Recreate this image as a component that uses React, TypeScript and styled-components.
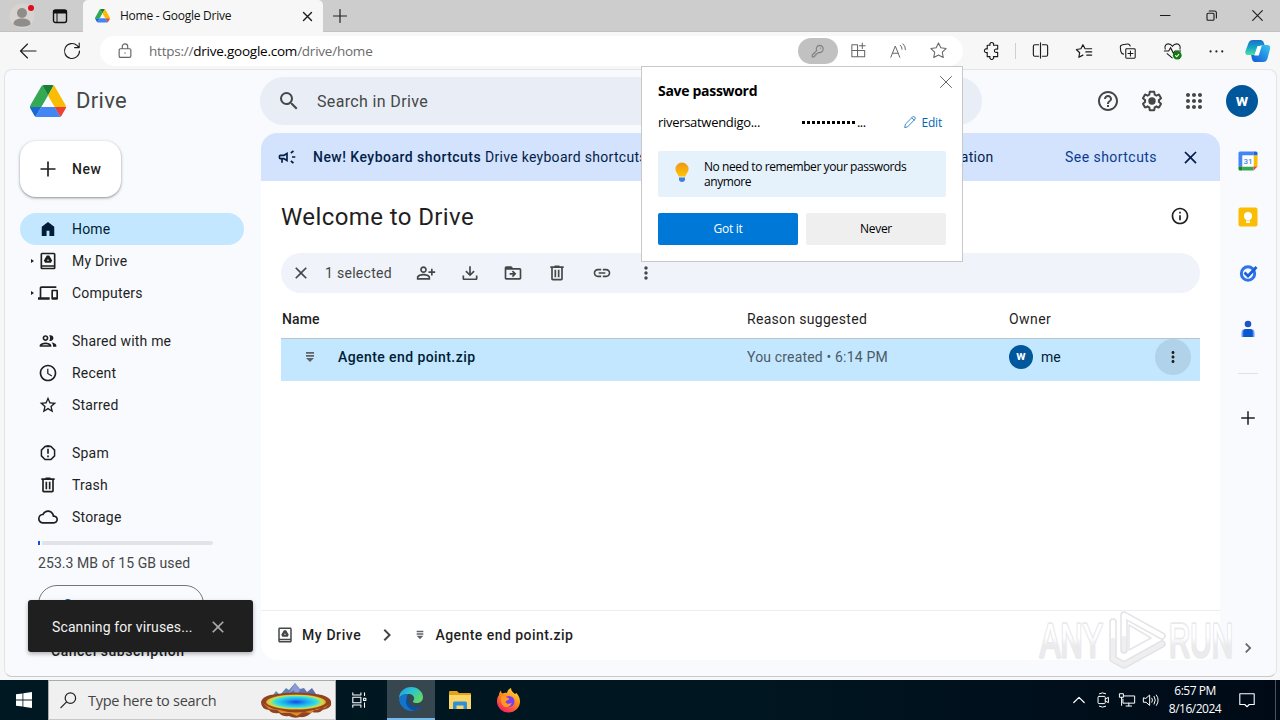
import React from 'react';
import styled, { createGlobalStyle } from 'styled-components';

const GlobalStyle = createGlobalStyle`
  * {
    box-sizing: border-box;
  }
  body {
    margin: 0;
    background: #f7f7f7;
    overflow: hidden;
  }
  svg {
    display: block;
    flex: none;
  }
`;

const UI_FONT = '"Open Sans", "Noto Sans", sans-serif';
const DRIVE_FONT = 'Roboto, "Liberation Sans", sans-serif';

/* ---------- shared ---------- */

interface IconProps {
  d: string;
  size?: number;
  box?: string;
  color?: string;
}

// filled glyph
const Icon: React.FC<IconProps> = ({ d, size = 20, box = '0 0 24 24', color = 'currentColor' }) => (
  <svg width={size} height={size} viewBox={box} fill={color}>
    <path d={d} fillRule="evenodd" />
  </svg>
);

interface LineIconProps extends IconProps {
  weight?: number;
}

// thin outline glyph, used by the browser chrome
const LineIcon: React.FC<LineIconProps> = ({ d, size = 20, box = '0 0 20 20', color = '#1b1b1b', weight = 1.1 }) => (
  <svg
    width={size}
    height={size}
    viewBox={box}
    fill="none"
    stroke={color}
    strokeWidth={weight}
    strokeLinecap="round"
    strokeLinejoin="round"
  >
    <path d={d} />
  </svg>
);

const Text = styled.span<{ $size?: number; $weight?: number; $color?: string; $track?: number }>`
  font-size: ${(p) => p.$size ?? 14}px;
  font-weight: ${(p) => p.$weight ?? 400};
  color: ${(p) => p.$color ?? 'inherit'};
  letter-spacing: ${(p) => p.$track ?? 0}px;
  white-space: pre;
`;

const Cell = styled.div<{ $w: number }>`
  width: ${(p) => p.$w}px;
  flex: none;
  display: flex;
  align-items: center;
  justify-content: center;
`;

const Spacer = styled.div`
  flex: 1;
`;

const icons = {
  close: 'M19 6.41 17.59 5 12 10.59 6.41 5 5 6.41 10.59 12 5 17.59 6.41 19 12 13.41 17.59 19 19 17.59 13.41 12z',
  search:
    'M15.5 14h-.79l-.28-.27A6.47 6.47 0 0 0 16 9.5 6.5 6.5 0 1 0 9.5 16c1.61 0 3.09-.59 4.23-1.57l.27.28v.79l5 4.99L20.49 19l-4.99-5zm-6 0C7.01 14 5 11.99 5 9.5S7.01 5 9.5 5 14 7.01 14 9.5 11.99 14 9.5 14z',
  home: 'M4.5 20.5V9.2L12 3.5l7.5 5.7v11.3h-5.8v-6.4h-3.4v6.4z',
  myDrive:
    'M19 2H5c-1.1 0-2 .9-2 2v16c0 1.1.9 2 2 2h14c1.1 0 2-.9 2-2V4c0-1.100-.9-2-2-2zm0 18H5v-1h14v1zm0-3H5V4h14v13zM13.5 5.500h-3L7 11.500 8.500 14.200h7L17 11.500zm-2.700 6.200L12 9.600l1.200 2.100z',
  computers:
    'M4 6h18V4H4c-1.1 0-2 .9-2 2v11H0v3h14v-3H4V6zm19 2h-6c-.55 0-1 .45-1 1v10c0 .55.45 1 1 1h6c.55 0 1-.45 1-1V9c0-.55-.45-1-1-1zm-1 9h-4v-7h4v7z',
  shared:
    'M9 13.750c-2.340 0-7 1.170-7 3.500V19h14v-1.750c0-2.330-4.660-3.500-7-3.500zM4.340 17c.84-.58 2.870-1.250 4.660-1.250s3.820.67 4.660 1.250H4.340zM9 12c1.930 0 3.500-1.570 3.500-3.500S10.930 5 9 5 5.500 6.570 5.500 8.500 7.070 12 9 12zm0-5c.83 0 1.500.67 1.500 1.500S9.830 10 9 10s-1.500-.67-1.500-1.500S8.170 7 9 7zm7.040 6.810c1.160.84 1.960 1.960 1.960 3.440V19h4v-1.750c0-2.020-3.500-3.170-5.960-3.440zM15 12c1.930 0 3.500-1.570 3.500-3.500S16.930 5 15 5c-.54 0-1.040.13-1.500.35.63.89 1 1.980 1 3.150s-.37 2.260-1 3.150c.46.22.96.35 1.500.35z',
  recent:
    'M11.990 2C6.470 2 2 6.480 2 12s4.470 10 9.990 10C17.520 22 22 17.520 22 12S17.520 2 11.990 2zM12 20c-4.420 0-8-3.580-8-8s3.580-8 8-8 8 3.580 8 8-3.580 8-8 8zm.5-13H11v6l5.250 3.150.75-1.230-4.500-2.670z',
  star: 'M22 9.240l-7.190-.62L12 2 9.190 8.630 2 9.240l5.460 4.730L5.820 21 12 17.270 18.180 21l-1.630-7.030L22 9.240zM12 15.400l-3.760 2.270 1-4.280-3.320-2.880 4.380-.38L12 6.100l1.710 4.040 4.380.38-3.320 2.880 1 4.280L12 15.400z',
  spam: 'M12 2.500 8 3.200 3.200 8v8L8 20.800h8l4.800-4.800V8L16 3.200zM8.800 5.100h6.400l3.800 3.800v6.200l-3.800 3.800H8.800L5 15.100V8.900zM11 7h2v6h-2zM11 15h2v2h-2z',
  trash:
    'M15 4V3H9v1H4v2h1v13c0 1.100.9 2 2 2h10c1.100 0 2-.9 2-2V6h1V4h-5zm2 15H7V6h10v13zM9 8h2v9H9zm4 0h2v9h-2z',
  cloud:
    'M19.350 10.040C18.670 6.590 15.640 4 12 4 9.110 4 6.600 5.640 5.350 8.040 2.340 8.360 0 10.910 0 14c0 3.310 2.690 6 6 6h13c2.760 0 5-2.240 5-5 0-2.640-2.050-4.780-4.650-4.960zM19 18H6c-2.210 0-4-1.790-4-4 0-2.050 1.530-3.760 3.560-3.970l1.070-.11.5-.95C8.080 7.140 9.940 6 12 6c2.620 0 4.880 1.860 5.390 4.430l.3 1.500 1.530.11c1.560.1 2.780 1.410 2.780 2.960 0 1.650-1.350 3-3 3z',
  help: 'M11 18h2v-2h-2v2zm1-16C6.480 2 2 6.480 2 12s4.480 10 10 10 10-4.480 10-10S17.520 2 12 2zm0 18c-4.410 0-8-3.590-8-8s3.590-8 8-8 8 3.590 8 8-3.590 8-8 8zm0-14c-2.210 0-4 1.790-4 4h2c0-1.100.9-2 2-2s2 .9 2 2c0 2-3 1.750-3 5h2c0-2.250 3-2.500 3-5 0-2.210-1.790-4-4-4z',
  settings:
    'M13.850 22.250h-3.700c-.74 0-1.360-.54-1.450-1.270l-.27-1.890c-.27-.14-.53-.29-.79-.46l-1.800.72c-.7.26-1.470-.03-1.810-.65L2.200 15.530c-.35-.66-.2-1.440.36-1.880l1.530-1.190c-.01-.15-.02-.3-.02-.46 0-.15.01-.31.02-.46l-1.520-1.190c-.59-.45-.74-1.260-.37-1.880l1.850-3.190c.34-.62 1.110-.9 1.790-.63l1.810.73c.26-.17.52-.32.78-.46l.27-1.910c.09-.7.71-1.250 1.440-1.250h3.700c.74 0 1.360.54 1.450 1.270l.27 1.890c.27.14.53.29.79.46l1.800-.72c.71-.26 1.480.03 1.820.65l1.840 3.180c.36.66.2 1.440-.36 1.880l-1.520 1.190c.01.15.02.3.02.46s-.01.31-.02.46l1.520 1.190c.56.45.72 1.230.37 1.860l-1.860 3.220c-.34.62-1.110.9-1.800.63l-1.800-.72c-.26.17-.52.32-.78.46l-.27 1.910c-.1.680-.720 1.220-1.460 1.220zm-3.230-2h2.760l.37-2.550.53-.22c.44-.18.88-.44 1.340-.78l.45-.34 2.380.96 1.380-2.400-2.030-1.580.07-.56c.03-.26.06-.51.06-.78s-.03-.53-.06-.78l-.07-.56 2.030-1.580-1.390-2.400-2.390.96-.45-.35c-.42-.32-.87-.58-1.330-.77l-.52-.22-.37-2.550h-2.760l-.37 2.550-.53.21c-.44.19-.88.44-1.340.79l-.45.33-2.380-.95-1.390 2.390 2.030 1.580-.07.56a7 7 0 0 0-.06.79c0 .26.02.53.06.78l.07.56-2.030 1.580 1.380 2.400 2.390-.96.45.35c.43.33.86.58 1.330.77l.53.22.38 2.550zM12 8.300a3.700 3.700 0 1 0 0 7.400 3.700 3.700 0 0 0 0-7.400z',
  apps: 'M6 8c1.100 0 2-.9 2-2s-.9-2-2-2-2 .9-2 2 .9 2 2 2zm6 12c1.100 0 2-.9 2-2s-.9-2-2-2-2 .9-2 2 .9 2 2 2zm-6 0c1.100 0 2-.9 2-2s-.9-2-2-2-2 .9-2 2 .9 2 2 2zm0-6c1.100 0 2-.9 2-2s-.9-2-2-2-2 .9-2 2 .9 2 2 2zm6 0c1.100 0 2-.9 2-2s-.9-2-2-2-2 .9-2 2 .9 2 2 2zm4-8c0 1.100.9 2 2 2s2-.9 2-2-.9-2-2-2-2 .9-2 2zm-4 2c1.100 0 2-.9 2-2s-.9-2-2-2-2 .9-2 2 .9 2 2 2zm6 6c1.100 0 2-.9 2-2s-.9-2-2-2-2 .9-2 2 .9 2 2 2zm0 6c1.100 0 2-.9 2-2s-.9-2-2-2-2 .9-2 2 .9 2 2 2z',
  campaign:
    'M18 11v2h4v-2h-4zM16 17.610c.96.71 2.210 1.650 3.200 2.390.4-.53.8-1.070 1.200-1.600-.99-.74-2.240-1.680-3.200-2.400-.4.540-.8 1.080-1.200 1.610zM20.400 5.600c-.4-.53-.8-1.070-1.200-1.600-.99.740-2.240 1.680-3.200 2.400.4.530.8 1.070 1.200 1.600.96-.720 2.210-1.650 3.200-2.400zM4 9c-1.100 0-2 .9-2 2v2c0 1.100.9 2 2 2h1v4h2v-4h1l5 3V6L8 9H4zm5.030 1.710L11 9.530v4.940l-1.970-1.180-.48-.29H4v-2h4.550l.48-.29z',
  info: 'M11 7h2v2h-2zm0 4h2v6h-2zm1-9C6.480 2 2 6.480 2 12s4.480 10 10 10 10-4.480 10-10S17.520 2 12 2zm0 18c-4.410 0-8-3.590-8-8s3.590-8 8-8 8 3.590 8 8-3.590 8-8 8z',
  personAdd:
    'M9 12c2.210 0 4-1.790 4-4s-1.790-4-4-4-4 1.790-4 4 1.790 4 4 4zm0-6c1.100 0 2 .9 2 2s-.9 2-2 2-2-.9-2-2 .9-2 2-2zm0 7c-2.670 0-8 1.340-8 4v3h16v-3c0-2.660-5.330-4-8-4zm6 5H3v-.99C3.200 16.290 6.300 15 9 15s5.800 1.290 6 2v1zm5-8V7h-2v3h-3v2h3v3h2v-3h3v-2z',
  download: 'M11 4h2v8.200l3.200-3.200 1.400 1.400L12 16l-5.600-5.600L7.800 9l3.200 3.200zM3 15h2v3.500h14V15h2v3.500c0 1.100-.9 2-2 2H5c-1.100 0-2-.9-2-2z',
  move: 'M20 6h-8l-2-2H4c-1.100 0-2 .9-2 2v12c0 1.100.9 2 2 2h16c1.100 0 2-.9 2-2V8c0-1.100-.9-2-2-2zm0 12H4V8h16v10zM12 9l-1.400 1.400 1.600 1.600H8v2h4.200l-1.600 1.600L12 17l4-4z',
  link: 'M3.900 12c0-1.710 1.390-3.100 3.100-3.100h4V7H7c-2.760 0-5 2.240-5 5s2.240 5 5 5h4v-1.900H7c-1.710 0-3.100-1.390-3.100-3.100zM8 13h8v-2H8v2zm9-6h-4v1.900h4c1.710 0 3.100 1.390 3.100 3.100s-1.390 3.100-3.100 3.100h-4V17h4c2.760 0 5-2.240 5-5s-2.240-5-5-5z',
  more: 'M12 8c1.100 0 2-.9 2-2s-.9-2-2-2-2 .9-2 2 .9 2 2 2zm0 2c-1.100 0-2 .9-2 2s.9 2 2 2 2-.9 2-2-.9-2-2-2zm0 6c-1.100 0-2 .9-2 2s.9 2 2 2 2-.9 2-2-.9-2-2-2z',
  chevron: 'M8.590 16.590 13.170 12 8.590 7.410 10 6l6 6-6 6z',
  plus: 'M11 3h2v8h8v2h-8v8h-2v-8H3v-2h8z',
  zip: 'M4 2h16v3.500H4zM4 8h16v3.500H4zM4 14h16L12 22z',
};

const DriveLogo: React.FC<{ size: number }> = ({ size }) => (
  <svg width={size} height={size * 0.9} viewBox="0 0 87.3 78">
    <path d="m6.600 66.850 3.850 6.650c.8 1.400 1.950 2.500 3.300 3.300l13.750-23.800h-27.500c0 1.550.4 3.100 1.200 4.500z" fill="#1967d2" />
    <path d="m43.650 25-13.750-23.800c-1.350.8-2.500 1.900-3.300 3.300l-25.400 44a9.060 9.060 0 0 0-1.200 4.500h27.500z" fill="#34a853" />
    <path d="m73.550 76.800c1.350-.8 2.500-1.900 3.300-3.300l1.600-2.750 7.650-13.250c.8-1.400 1.200-2.950 1.200-4.500h-27.500l5.850 11.500z" fill="#ea4335" />
    <path d="m43.650 25 13.750-23.800c-1.350-.8-2.900-1.200-4.500-1.200h-18.500c-1.600 0-3.150.45-4.500 1.200z" fill="#188038" />
    <path d="m59.800 53h-32.300l-13.750 23.800c1.350.8 2.900 1.200 4.500 1.200h50.800c1.600 0 3.150-.45 4.500-1.200z" fill="#4285f4" />
    <path d="m73.400 26.500-12.700-22c-.8-1.400-1.950-2.500-3.300-3.300l-13.750 23.800 16.150 28h27.450c0-1.550-.4-3.100-1.200-4.500z" fill="#fbbc04" />
  </svg>
);

/* ---------- browser chrome ---------- */

const Screen = styled.div`
  position: relative;
  width: 1280px;
  height: 720px;
  display: flex;
  flex-direction: column;
  overflow: hidden;
  background: #f7f7f7;
  font-family: ${UI_FONT};
`;

const TitleBar = styled.div`
  height: 32px;
  flex: none;
  display: flex;
  background: #cdcdcd;
  border-bottom: 1px solid #c2c2c2;
`;

const Tab = styled.div`
  width: 240px;
  height: 32px;
  margin-left: 2px;
  padding: 0 10px 0 12px;
  display: flex;
  align-items: center;
  background: #f7f7f7;
  border-radius: 5px 5px 0 0;
`;

const TabTitle = styled.div`
  flex: 1;
  padding-left: 10px;
  font-size: 12px;
  line-height: 16px;
  letter-spacing: -0.25px;
  white-space: nowrap;
  color: #111;
`;

const ToolBar = styled.div`
  height: 37px;
  flex: none;
  display: flex;
  align-items: center;
  padding-left: 6px;
`;

const AddressBar = styled.div`
  width: 863px;
  height: 30px;
  margin: 0 6px 0 6px;
  display: flex;
  align-items: center;
  background: #fff;
  border-radius: 15px;
`;

const Url = styled.div`
  flex: 1;
  font-size: 13.5px;
  letter-spacing: -0.23px;
  color: #6b6b6b;
  white-space: nowrap;

  b {
    font-weight: 400;
    color: #000;
  }
`;

const KeyPill = styled.div`
  width: 40px;
  height: 26px;
  display: flex;
  align-items: center;
  justify-content: center;
  background: #c1c1c1;
  border-radius: 13px;
`;

const Separator = styled.div`
  width: 1px;
  height: 16px;
  margin: 0 2px;
  background: #cfcfcf;
`;

const Chrome = () => (
  <>
    <TitleBar>
      <Cell $w={44}>
        <svg width="26" height="26" viewBox="0 0 26 26">
          <circle cx="13" cy="13" r="12.500" fill="#d6d3d1" />
          <circle cx="13" cy="10" r="5" fill="#8f8c8a" />
          <path d="M4.500 21c0-4 4-5.500 8.500-5.500s8.500 1.500 8.500 5.500c-2 3.500-15 3.500-17 0z" fill="#8f8c8a" />
          <circle cx="22" cy="5" r="3" fill="#e00b1c" />
        </svg>
      </Cell>
      <Cell $w={32}>
        <svg width="16" height="16" viewBox="0 0 16 16">
          <rect x="1.500" y="2" width="13" height="12.500" rx="2" fill="none" stroke="#111" strokeWidth="1.400" />
          <path d="M1.500 2h13v3.500h-13z" fill="#111" />
          <path d="M5 4v10" stroke="#111" />
        </svg>
      </Cell>
      <Cell $w={5} />
      <Tab>
        <DriveLogo size={15} />
        <TabTitle>Home - Google Drive</TabTitle>
        <LineIcon d="M1.500 1.500l8 8m0-8l-8 8" size={11} box="0 0 11 11" weight={1.400} />
      </Tab>
      <Cell $w={34}>
        <LineIcon d="M7 .5v13M.5 7h13" size={14} box="0 0 14 14" color="#222" weight={1.200} />
      </Cell>
      <Spacer />
      <Cell $w={46}>
        <LineIcon d="M0 5.500h10" size={11} box="0 0 11 11" />
      </Cell>
      <Cell $w={46}>
        <LineIcon d="M1 4.200q0-1 1-1h5q1 0 1 1v5q0 1-1 1h-5q-1 0-1-1zM3.200 1h5.200q2 0 2 2v5" size={11} box="0 0 11 11" />
      </Cell>
      <Cell $w={46}>
        <LineIcon d="M.7.7l9.600 9.600m0-9.600L.7 10.300" size={11} box="0 0 11 11" />
      </Cell>
    </TitleBar>
    <ToolBar>
      <Cell $w={44}>
        <LineIcon d="M18 10H2.500M9.500 3 2.500 10l7 7" />
      </Cell>
      <Cell $w={44}>
        <LineIcon d="M17.500 10a7.500 7.500 0 1 1-2.300-5.400L17 6.500M17.200 2v4.600h-4.600" />
      </Cell>
      <AddressBar>
        <Cell $w={49}>
          <LineIcon d="M5 7.500h10q1.500 0 1.500 1.500v6.500q0 1.500-1.500 1.500h-10q-1.500 0-1.500-1.500V9q0-1.500 1.500-1.500zM7 7.500V5a3 3 0 0 1 6 0v2.500M10 12v.4" size={18} color="#666" weight={1.300} />
        </Cell>
        <Url>
          https://<b>drive.google.com</b>/drive/home
        </Url>
        <KeyPill>
          <LineIcon d="M12 3a4.500 4.500 0 1 1-1.300 8.800L9 13.500H7.500V15H6v1.500l-1 .8H2.800V15l5.500-5.500A4.500 4.500 0 0 1 12 3zM13.200 6.400v.2" size={16} color="#808080" weight={1.400} />
        </KeyPill>
        <Cell $w={40}>
          <LineIcon d="M3 4h6v6H3zM3 10h6v6.500H3zM9 10h7.500v6.500H9zM14 2v6M11 5h6" size={19} color="#666" />
        </Cell>
        <Cell $w={40}>
          <LineIcon d="M2 17 7 4.500 12 17M3.800 12.500h6.500M12.500 3.500q2 1.500 2 4.500M15.500 2q2.800 2 2.800 6.500" size={18} color="#666" />
        </Cell>
        <Cell $w={40}>
          <LineIcon d="M10 2l2.450 5.100 5.550.8-4 3.900 1 5.600-5-2.700-5 2.700 1-5.600-4-3.900 5.550-.8z" size={19} color="#666" />
        </Cell>
        <Cell $w={5} />
      </AddressBar>
      <Cell $w={44}>
        <LineIcon d="M5.500 4.500h3a2 2 0 1 1 3.500 0h4.500v4h-1.200a1.800 1.800 0 1 0 0 3.500h1.200v4.500H12a2 2 0 1 1-3.500 0H5.500V12a2 2 0 1 1 0-3.500z" size={19} weight={1.200} />
      </Cell>
      <Separator />
      <Cell $w={44}>
        <LineIcon d="M8 4H4q-1.500 0-1.500 1.500v9Q2.500 16 4 16h4M12 4h4q1.500 0 1.500 1.500v9q0 1.500-1.500 1.500h-4M10 2v16" size={19} weight={1.200} />
      </Cell>
      <Cell $w={44}>
        <LineIcon d="M12 7.500h-.8L8.800 3 6.600 7.500l-5.100.8 3.700 3.600-.9 5.100 4.500-2.400M13 7.500h5.500M12 11h6.500M13 14.500h5.500" size={18} weight={1.300} />
      </Cell>
      <Cell $w={44}>
        <LineIcon d="M8.500 7.500H17q1 0 1 1V17q0 1-1 1H8.500q-1 0-1-1V8.500q0-1 1-1zM12.700 10v5.500M10 12.700h5.500M5 13.500Q2.500 13 2 10.500L1.500 6Q1.300 3.500 4 3l5.500-.8q2-.2 3 2.300" size={18} weight={1.200} />
      </Cell>
      <Cell $w={44}>
        <svg width="19" height="19" viewBox="0 0 20 20" fill="none" stroke="#1b1b1b" strokeWidth="1.200">
          <path d="M2.500 9C1 5.500 3 3 5.500 3 8 3 9 4 10 5.500 11 4 12 3 14.500 3s4.500 2.500 3.300 6M1 10.500h5L8 7l3 6 1.800-2.500H19M4 13l6 5" />
          <circle cx="15" cy="15" r="4.600" fill="#107c10" stroke="none" />
          <path d="M12.900 15.200l1.500 1.400 2.500-2.700" stroke="#fff" />
        </svg>
      </Cell>
      <Cell $w={44}>
        <Icon d="M4.200 12.500a1.300 1.300 0 1 0 2.600 0 1.300 1.300 0 1 0-2.600 0zM11.200 12.500a1.300 1.300 0 1 0 2.600 0 1.300 1.300 0 1 0-2.600 0zM18.200 12.500a1.300 1.300 0 1 0 2.600 0 1.300 1.300 0 1 0-2.600 0z" size={20} color="#222" />
      </Cell>
      <Cell $w={40}>
        <svg width="26" height="26" viewBox="0 0 26 26">
          <defs>
            <linearGradient id="cpA" x1="0" y1="0" x2="0" y2="1">
              <stop offset="0" stopColor="#1b6fc2" />
              <stop offset=".5" stopColor="#15a6c8" />
              <stop offset="1" stopColor="#4ee0a0" />
            </linearGradient>
            <linearGradient id="cpB" x1="1" y1="0" x2="0" y2="1">
              <stop offset="0" stopColor="#38c6f0" />
              <stop offset="1" stopColor="#1255d8" />
            </linearGradient>
          </defs>
          <path d="M18.500 7h3.500q4 0 3 4l-2.500 9.500Q21.500 24 18 24H9.500q-2-.3-2.700-3.500l-.6-3.500h3.500q2.500 0 3.300-2.700L14.800 9q.7-2 3.700-2z" fill="url(#cpB)" />
          <path d="M8 2h8q2.300.3 3 3l.5 2h-2.500q-2.300 0-3 2.500l-1.500 5Q11.500 17 9 17H3.500q-4 0-3-4L3.500 5Q4.500 2 8 2z" fill="url(#cpA)" />
          <path d="M12.500 8h4.200l-3 9.500H9.300z" fill="#fff" />
        </svg>
      </Cell>
    </ToolBar>
  </>
);

/* ---------- drive page ---------- */

const Page = styled.div`
  height: 608px;
  flex: none;
  margin: 0 3px 0 4px;
  display: flex;
  flex-direction: column;
  background: #f8fafd;
  border: 1px solid #e3e4ea;
  border-bottom-color: #c9c9cf;
  border-radius: 8px;
  overflow: hidden;
  font-family: ${DRIVE_FONT};
  color: #1f1f1f;
`;

const Header = styled.div`
  height: 63px;
  flex: none;
  display: flex;
  align-items: center;
  padding-bottom: 1px;
`;

const Brand = styled.div`
  width: 255px;
  flex: none;
  padding-left: 25px;
  display: flex;
  align-items: center;
  gap: 10px;
`;

const SearchBox = styled.div`
  width: 722px;
  height: 48px;
  display: flex;
  align-items: center;
  padding-left: 17px;
  gap: 16px;
  background: #e9eef6;
  border-radius: 24px;
  color: #444746;
`;

const HeaderTools = styled.div`
  flex: 1;
  display: flex;
  align-items: center;
  justify-content: flex-end;
  padding-right: 18px;
  color: #444746;
`;

const Avatar = styled.div<{ $size: number }>`
  width: ${(p) => p.$size}px;
  height: ${(p) => p.$size}px;
  flex: none;
  display: flex;
  align-items: center;
  justify-content: center;
  padding-bottom: 2px;
  border-radius: 50%;
  background: #01579b;
  color: #fff;
  font-family: Roboto, sans-serif;
  font-size: ${(p) => p.$size * 0.53}px;
  font-weight: 700;
  line-height: 1;
`;

const Body = styled.div`
  flex: 1;
  min-height: 0;
  display: flex;
`;

const SideBar = styled.div`
  width: 256px;
  flex: none;
  padding: 8px 0 0 15px;
  display: flex;
  flex-direction: column;
  overflow: hidden;
`;

const NewButton = styled.div`
  width: 101px;
  height: 56px;
  flex: none;
  margin-bottom: 16px;
  padding-left: 18px;
  display: flex;
  align-items: center;
  gap: 14px;
  background: #fff;
  border-radius: 16px;
  box-shadow: 0 1px 2px rgba(60, 64, 67, 0.4), 0 1px 3px 1px rgba(60, 64, 67, 0.15);
`;

const NavItem = styled.div<{ $active?: boolean; $gap?: boolean }>`
  width: 224px;
  height: 32px;
  flex: none;
  margin-bottom: ${(p) => (p.$gap ? 16 : 0)}px;
  padding-left: 9px;
  display: flex;
  align-items: center;
  border-radius: 16px;
  background: ${(p) => (p.$active ? '#c2e7ff' : 'transparent')};
  color: ${(p) => (p.$active ? '#001d35' : '#1f1f1f')};
`;

const Arrow = styled.div<{ $show?: boolean }>`
  width: 9px;
  flex: none;

  &::before {
    content: '';
    display: ${(p) => (p.$show ? 'block' : 'none')};
    width: 0;
    margin-left: 2px;
    border: 2.5px solid transparent;
    border-left: 3px solid #1f1f1f;
    border-right: none;
  }
`;

const NavIcon = styled.div`
  width: 34px;
  display: flex;
`;

const Quota = styled.div`
  width: 175px;
  height: 4px;
  flex: none;
  margin: 8px 0 0 18px;
  background: #e1e3e8;
  border-radius: 2px;
`;

const QuotaUsed = styled.div`
  width: 4px;
  height: 4px;
  background: #0b57d0;
  border-right: 2px solid #f8fafd;
`;

const QuotaText = styled.div`
  margin: 9px 0 0 18px;
  font-size: 14px;
  line-height: 18px;
  letter-spacing: 0.07px;
  color: #444746;
  white-space: nowrap;
`;

const StorageButton = styled.div`
  width: 166px;
  height: 38px;
  flex: none;
  margin: 13px 0 0 18px;
  display: flex;
  align-items: center;
  padding: 2px 0 0 24px;
  border: 1px solid #747775;
  border-radius: 19px;
  color: #0b57d0;
`;

const CancelLink = styled.div`
  margin: 18px 0 0 31px;
  line-height: 20px;
`;

const nav = [
  { label: 'Home', icon: 'home', active: true },
  { label: 'My Drive', icon: 'myDrive', arrow: true },
  { label: 'Computers', icon: 'computers', arrow: true, gap: true },
  { label: 'Shared with me', icon: 'shared' },
  { label: 'Recent', icon: 'recent' },
  { label: 'Starred', icon: 'star', gap: true },
  { label: 'Spam', icon: 'spam' },
  { label: 'Trash', icon: 'trash' },
  { label: 'Storage', icon: 'cloud' },
] as { label: string; icon: keyof typeof icons; active?: boolean; arrow?: boolean; gap?: boolean }[];

const Navigation = () => (
  <SideBar>
    <NewButton>
      <Icon d={icons.plus} />
      <Text $weight={500} $track={0.5}>New</Text>
    </NewButton>
    {nav.map((item) => (
      <NavItem key={item.label} $active={item.active} $gap={item.gap}>
        <Arrow $show={item.arrow} />
        <NavIcon>
          <Icon d={icons[item.icon]} />
        </NavIcon>
        <Text $track={0.2}>{item.label}</Text>
      </NavItem>
    ))}
    <Quota>
      <QuotaUsed />
    </Quota>
    <QuotaText>253.3 MB of 15 GB used</QuotaText>
    <StorageButton>
      <Text $weight={500}>Get more storage</Text>
    </StorageButton>
    <CancelLink>
      <Text $weight={500} $track={0.5}>Cancel subscription</Text>
    </CancelLink>
  </SideBar>
);

const Main = styled.div`
  width: 959px;
  flex: none;
  height: 527px;
  display: flex;
  flex-direction: column;
  background: #fff;
  border-radius: 16px;
  overflow: hidden;
`;

const Promo = styled.div`
  height: 48px;
  flex: none;
  display: flex;
  align-items: center;
  padding-left: 16px;
  background: #d3e3fd;
  color: #041e49;
`;

const PromoText = styled.div`
  flex: 1;
  padding-left: 16px;
  display: flex;
`;

const TitleRow = styled.div`
  height: 72px;
  display: flex;
  align-items: center;
  justify-content: space-between;
  padding: 0 30px 0 20px;

  svg {
    margin-top: -2px;
  }
`;

const ActionBar = styled.div`
  height: 40px;
  margin: 0 20px;
  display: flex;
  align-items: center;
  background: #f0f3f9;
  border-radius: 20px;
  color: #444746;
`;

const Columns = styled.div`
  margin: 0 20px;
  display: grid;
  grid-template-columns: 466px 262px 1fr;
  align-items: center;
`;

const ColumnHead = styled(Columns)`
  height: 45px;
  padding: 7px 0 0 1px;
  grid-template-columns: 465px 262px 1fr;
`;

const FileRow = styled(Columns)`
  height: 43px;
  padding-bottom: 6px;
  background: #c2e7ff;
  border-top: 1px solid #b9c3cb;
`;

const NameCell = styled.div`
  display: flex;
  align-items: center;
  padding-left: 23px;
  gap: 22px;
  color: #001d35;
`;

const OwnerCell = styled.div`
  display: flex;
  align-items: center;
  gap: 8px;
`;

const RowMenu = styled.div`
  width: 36px;
  height: 36px;
  margin-left: auto;
  margin-right: 9px;
  display: flex;
  align-items: center;
  justify-content: center;
  background: #b0d3ea;
  border-radius: 50%;
`;

const PathBar = styled.div`
  height: 50px;
  flex: none;
  margin-top: auto;
  display: flex;
  align-items: center;
  padding: 0 0 2px 15px;
  border-top: 1px solid #ededf0;
`;

const Files = () => (
  <Main>
    <Promo>
      <Icon d={icons.campaign} />
      <PromoText>
        <Text $weight={500} $track={0.47}>New! Keyboard shortcuts</Text>
        <Text $track={0.3}> Drive keyboard shortcuts</Text>
        <Text $track={0.28}> have been updated to give you first-letters navigation</Text>
      </PromoText>
      <Text $track={0.45} $color="#0b3b91">See shortcuts</Text>
      <Cell $w={3} />
      <Cell $w={60}>
        <Icon d={icons.close} size={21} />
      </Cell>
    </Promo>
    <TitleRow>
      <Text $size={24} $track={0.4}>Welcome to Drive</Text>
      <Icon d={icons.info} />
    </TitleRow>
    <ActionBar>
      <Cell $w={40}>
        <Icon d={icons.close} />
      </Cell>
      <Cell $w={75}>
        <Text $track={0.28} $color="#444746">1 selected</Text>
      </Cell>
      <Cell $w={8} />
      <Cell $w={44}>
        <Icon d={icons.personAdd} />
      </Cell>
      <Cell $w={44}>
        <Icon d={icons.download} />
      </Cell>
      <Cell $w={42}>
        <Icon d={icons.move} />
      </Cell>
      <Cell $w={46}>
        <Icon d={icons.trash} />
      </Cell>
      <Cell $w={44}>
        <Icon d={icons.link} />
      </Cell>
      <Cell $w={44}>
        <Icon d={icons.more} />
      </Cell>
    </ActionBar>
    <ColumnHead>
      <Text $weight={500} $track={0.1}>Name</Text>
      <Text $track={0.3}>Reason suggested</Text>
      <Text $track={0.45}>Owner</Text>
    </ColumnHead>
    <FileRow>
      <NameCell>
        <Icon d={icons.zip} size={12} color="#5f6368" />
        <Text $weight={500} $track={0.42}>Agente end point.zip</Text>
      </NameCell>
      <Text $track={0.17} $color="#4c5a66">You created • 6:14 PM</Text>
      <OwnerCell>
        <Avatar $size={24}>w</Avatar>
        <Text $color="#001d35">me</Text>
        <RowMenu>
          <Icon d={icons.more} size={18} />
        </RowMenu>
      </OwnerCell>
    </FileRow>
    <PathBar>
      <Icon d={icons.myDrive} size={18} color="#444746" />
      <Cell $w={8} />
      <Text $weight={500} $track={0.6}>My Drive</Text>
      <Cell $w={52}>
        <Icon d={icons.chevron} size={24} color="#444746" />
      </Cell>
      <Cell $w={14}>
        <Icon d={icons.zip} size={10} color="#5f6368" />
      </Cell>
      <Cell $w={8} />
      <Text $weight={500} $track={0.45}>Agente end point.zip</Text>
    </PathBar>
  </Main>
);

const Rail = styled.div`
  flex: 1;
  display: flex;
  flex-direction: column;
  align-items: center;
  padding: 18px 0 18px;
`;

const RailItem = styled.div`
  height: 20px;
  margin-bottom: 36px;
`;

const RailDivider = styled.div`
  width: 20px;
  height: 1px;
  margin: -2px 0 35px;
  background: #dfe1e5;
`;

const SidePanel = () => (
  <Rail>
    <RailItem>
      <svg width="20" height="20" viewBox="0 0 20 20">
        <path d="M2 .5h13.500v4h-11v11h-4V2Q.5.500 2 .5z" fill="#4285f4" />
        <path d="M15.500.5H18Q19.500.500 19.500 2v2.500h-4z" fill="#1967d2" />
        <path d="M15.500 4.500h4v11h-4z" fill="#fbbc04" />
        <path d="M4.500 15.500h11v4h-11z" fill="#34a853" />
        <path d="M.5 15.500h4v4H2q-1.500 0-1.500-1.500z" fill="#188038" />
        <path d="M15.500 15.500h4l-4 4z" fill="#ea4335" />
        <path d="M4.500 4.500h11v11h-11z" fill="#fff" />
        <text x="10" y="13" textAnchor="middle" fontFamily="Roboto" fontSize="8" fontWeight="500" fill="#4285f4">31</text>
      </svg>
    </RailItem>
    <RailItem>
      <svg width="20" height="20" viewBox="0 0 20 20">
        <rect x=".5" y=".5" width="19" height="19" rx="2" fill="#fbbc04" />
        <circle cx="10" cy="9" r="4" fill="#fff" />
        <path d="M8 12h4v4H8z" fill="#fff" />
        <path d="M8 13.700h4" stroke="#fbbc04" strokeWidth=".7" />
      </svg>
    </RailItem>
    <RailItem>
      <svg width="20" height="20" viewBox="0 0 20 20" fill="none">
        <circle cx="10" cy="10.500" r="6.700" stroke="#2f73ea" strokeWidth="3" />
        <path d="M6.500 9.500l3.500 3.500 8.500-9" stroke="#1a5fd8" strokeWidth="2.800" />
      </svg>
    </RailItem>
    <RailItem>
      <svg width="20" height="20" viewBox="0 0 20 20">
        <circle cx="10" cy="5" r="3.300" fill="#1a56c4" />
        <path d="M3.500 14Q3.500 10 7.500 10h5q4 0 4 4v4h-13z" fill="#669df6" />
        <path d="M5.200 13q0-3 3-3h3.600q3 0 3 3v5H5.200z" fill="#0b57d0" />
      </svg>
    </RailItem>
    <RailDivider />
    <Icon d={icons.plus} size={18} />
    <Spacer />
    <Icon d={icons.chevron} size={20} color="#5f6368" />
  </Rail>
);

/* ---------- things floating above the page ---------- */

const Popup = styled.div`
  position: absolute;
  left: 641px;
  top: 66px;
  width: 322px;
  height: 196px;
  padding: 0 16px;
  display: flex;
  flex-direction: column;
  background: #fff;
  border: 1px solid #c8c8c8;
  color: #000;
`;

const PopupTop = styled.div`
  height: 42px;
  display: flex;
  align-items: center;
  justify-content: space-between;
  padding-top: 5px;
  margin-right: -6px;

  svg {
    margin-top: -17px;
  }
`;

const Credentials = styled.div`
  height: 26px;
  display: flex;
  align-items: center;
  font-size: 13px;
`;

const UserName = styled.div`
  width: 144px;
  letter-spacing: -0.3px;
`;

const Password = styled.div`
  flex: 1;
  display: flex;
  align-items: center;
  gap: 2px;
  letter-spacing: -0.6px;
`;

const Dot = styled.i`
  width: 3px;
  height: 3px;
  background: #000;
`;

const EditLink = styled.div`
  display: flex;
  align-items: center;
  gap: 4px;
  padding-right: 4px;
  font-size: 12px;
  letter-spacing: -0.2px;
  color: #0067b8;
`;

const Hint = styled.div`
  height: 46px;
  margin: 16px 0;
  padding-left: 14px;
  display: flex;
  align-items: center;
  gap: 12px;
  background: #e5f1fb;
  border-radius: 2px;
  font-size: 12px;
  line-height: 15px;
  letter-spacing: -0.42px;
`;

const Buttons = styled.div`
  display: flex;
  gap: 8px;
`;

const Button = styled.div<{ $primary?: boolean }>`
  flex: 1;
  height: 32px;
  display: flex;
  align-items: center;
  justify-content: center;
  padding-bottom: 1px;
  border-radius: 2px;
  font-size: 12px;
  letter-spacing: -0.3px;
  background: ${(p) => (p.$primary ? '#0078d7' : '#efefef')};
  color: ${(p) => (p.$primary ? '#fff' : '#000')};
`;

const SavePassword = () => (
  <Popup>
    <PopupTop>
      <Text $size={14} $weight={700} $track={-0.3}>Save password</Text>
      <LineIcon d="M.5.5l11 11m0-11l-11 11" size={12} box="0 0 12 12" color="#555" weight={0.9} />
    </PopupTop>
    <Credentials>
      <UserName>riversatwendigo...</UserName>
      <Password>
        {Array.from({ length: 11 }, (_, i) => (
          <Dot key={i} />
        ))}
        <span>...</span>
      </Password>
      <EditLink>
        <LineIcon d="M2.500 17.500l1-4.500L14 2.500q1.500-1 2.800.5 1.500 1.300.5 2.800L7 16.500zM12.500 4l3.500 3.500" size={14} color="#2a7fc4" weight={1.300} />
        Edit
      </EditLink>
    </Credentials>
    <Hint>
      <svg width="20" height="24" viewBox="0 0 20 24">
        <defs>
          <linearGradient id="bulb" x1="0" y1="0" x2="0" y2="1">
            <stop offset="0" stopColor="#f0951c" />
            <stop offset="1" stopColor="#ffc400" />
          </linearGradient>
        </defs>
        <path d="M10 .5a6.600 6.600 0 0 1 6.600 6.600c0 2.700-2.200 3.900-3.200 7.400H6.600C5.600 11 3.400 9.800 3.400 7.100A6.600 6.600 0 0 1 10 .5z" fill="url(#bulb)" />
        <path d="M7 15.500h6V18q-.5 2-3 2t-3-2z" fill="#3f7fe0" />
      </svg>
      <div>
        No need to remember your passwords
        <br />
        anymore
      </div>
    </Hint>
    <Buttons>
      <Button $primary>Got it</Button>
      <Button>Never</Button>
    </Buttons>
  </Popup>
);

const Snackbar = styled.div`
  position: absolute;
  left: 28px;
  top: 600px;
  width: 225px;
  height: 52px;
  padding: 2px 25px 0 24px;
  display: flex;
  align-items: center;
  justify-content: space-between;
  background: #1f1f1f;
  border-radius: 3px;
  box-shadow: 0 2px 4px rgba(0, 0, 0, 0.3);
  color: #f2f2f2;
  font-family: ${DRIVE_FONT};
`;

const Watermark = styled.div`
  position: absolute;
  left: 1034px;
  top: 608px;
  width: 208px;
  height: 66px;
`;

const Brandmark = () => (
  <Watermark>
    <svg width="208" height="66" viewBox="-4 0 208 66">
      <defs>
        <linearGradient id="markFill" x1="0" y1="0" x2="0" y2="1">
          <stop offset=".45" stopColor="#fff" />
          <stop offset=".6" stopColor="#ebebee" />
        </linearGradient>
      </defs>
      <g
        fill="url(#markFill)"
        stroke="#e9e9ec"
        strokeWidth="3.500"
        strokeLinejoin="round"
        paintOrder="stroke"
        fontFamily="Liberation Sans"
        fontSize="49"
      >
        <text x="2" y="49" textLength="63" lengthAdjust="spacingAndGlyphs">ANY</text>
        <text x="131" y="49" textLength="64" lengthAdjust="spacingAndGlyphs">RUN</text>
      </g>
      <g fill="none" strokeLinejoin="round" strokeLinecap="round">
        <path d="M86 42V7l38 21M75 14v37l11 6 38-21" stroke="#e3e3e6" strokeWidth="7.500" />
        <path d="M86 30V7l38 21M75 14v18" stroke="#fff" strokeWidth="4.500" />
        <path d="M86 30v12M75 32v19l11 6 38-21" stroke="#efeff2" strokeWidth="4.500" />
        <path d="M91 17v25l22-12z" fill="#fff" stroke="#e6e6e9" strokeWidth="1.500" />
      </g>
    </svg>
  </Watermark>
);

/* ---------- taskbar ---------- */

const TaskBar = styled.div`
  height: 40px;
  flex: none;
  margin-top: auto;
  display: flex;
  align-items: stretch;
  background: linear-gradient(90deg, #001822, #001722 55%, #000a17);
`;

const TaskSearch = styled.div`
  width: 288px;
  display: flex;
  align-items: center;
  background: #f0f0f0;
  border: 1px solid #a8acae;
  border-bottom-color: #c8c8c8;
  color: #444;
`;

const ActiveApp = styled.div`
  width: 48px;
  display: flex;
  align-items: center;
  justify-content: center;
  background: #36474f;
  border-bottom: 2px solid #76b9ed;
`;

const Clock = styled.div`
  width: 64px;
  display: flex;
  flex-direction: column;
  align-items: center;
  justify-content: center;
  font-size: 12px;
  line-height: 18px;
  letter-spacing: -0.5px;
  color: #fff;
`;

const ShowDesktop = styled.div`
  width: 5px;
  border-left: 1px solid #4a535d;
`;

const Lake = () => (
  <svg width="72" height="36" viewBox="0 0 72 36">
    <defs>
      <radialGradient id="lake">
        <stop offset="0" stopColor="#1747e0" />
        <stop offset=".35" stopColor="#1ca2f2" />
        <stop offset=".7" stopColor="#35dfe0" />
        <stop offset=".88" stopColor="#c9e04c" />
        <stop offset="1" stopColor="#f29a2e" />
      </radialGradient>
      <linearGradient id="hill" x1="0" y1="0" x2="1" y2="1">
        <stop offset="0" stopColor="#56ad9b" />
        <stop offset=".5" stopColor="#6573b4" />
        <stop offset="1" stopColor="#4f5a8f" />
      </linearGradient>
    </defs>
    <path d="M11 16l5-7 4 4 6-7 3 2 6-7 5 6 4-1 3 4 5-4 4 6 4 1 3 6z" fill="url(#hill)" />
    <path d="M35 1l-6 10 5-3 2 7 4-7z" fill="#8b9bd6" />
    <path d="M1 20q1-5 9-7 26-5 52 0 10 3 9 8 1 4-5 6-3 0-6 3-5 1-8 0-5 6-12 5-6 2-11-1-6 1-10-3-7 1-10-3-8-1-8-8z" fill="#8f431f" />
    <path d="M3 21q7 6 17 7 16 5 33 0 9 0 16-6l-4 4-9 1-5 4-8-1-6 4-7-3-9 0-4-3-8-1z" fill="#e08a2c" />
    <ellipse cx="36" cy="20" rx="30" ry="7.500" fill="url(#lake)" />
  </svg>
);

const Tasks = () => (
  <TaskBar>
    <Cell $w={48}>
      <Icon d="M0 2.300 6.500 1.400V7.600H0zM7.300 1.300 16 0v7.600H7.300zM0 8.400h6.500v6.200L0 13.700zM7.300 8.400H16V16l-8.700-1.300z" box="0 0 16 16" size={16} color="#fff" />
    </Cell>
    <TaskSearch>
      <Cell $w={39}>
        <LineIcon d="M12 2a5.500 5.500 0 1 1 0 11 5.500 5.500 0 0 1 0-11zM8 11.500 2 17.500" size={19} color="#222" weight={1.300} />
      </Cell>
      <Text $size={14.5} $track={-0.27}>Type here to search</Text>
      <Spacer />
      <Cell $w={78}>
        <Lake />
      </Cell>
    </TaskSearch>
    <Cell $w={48}>
      <LineIcon d="M2 2v2.500h9V2M2 7h9v6H2zM2 18v-2.500h9V18M15 2v3M15 13v5M14 8h2.500v2.500H14z" color="#fff" size={18} weight={1.200} />
    </Cell>
    <Cell $w={3} />
    <ActiveApp>
      <svg width="26" height="26" viewBox="0 0 26 26">
        <defs>
          <linearGradient id="edgeTop" x1="0" y1="0" x2="1" y2=".6">
            <stop offset="0" stopColor="#1f9ae0" />
            <stop offset=".5" stopColor="#2bc3cf" />
            <stop offset="1" stopColor="#5fd96a" />
          </linearGradient>
        </defs>
        <path d="M1 12C1.500 5 7 1 13 1c7 0 12 5 12 10 0 4-3 6-6.500 6-3 0-4.500-1-3-2.500 1.500-1.800.5-6-4-6.500C7 7.500 3 9 1 12z" fill="url(#edgeTop)" />
        <path d="M1 12c2-3 6-4.500 9.500-4C7 10 7.500 21 18 21.500c2 0 4-.5 5-1.500-4 6-13 6.500-18 1.500C2 18.500 1 15.500 1 12z" fill="#1474c8" />
        <path d="M9 12c-3 5 1 11.500 7 12.500 3-.5 6-2.500 7.500-5-3 2-8 2-11-.5-2-1.500-3-4-2-7z" fill="#0c4f9e" />
      </svg>
    </ActiveApp>
    <Cell $w={49}>
      <svg width="24" height="22" viewBox="0 0 24 22">
        <path d="M1 3q0-1 1-1h7l2 2h11q1 0 1 1v15H1z" fill="#e3a21a" />
        <path d="M1 6h22v14H1z" fill="#fbd667" />
        <path d="M5 20v-6q0-1.500 1.500-1.500h11Q19 12.500 19 14v6h-3.500v-3.500h-7V20z" fill="#2f8fd8" />
      </svg>
    </Cell>
    <Cell $w={49}>
      <svg width="25" height="25" viewBox="0 0 25 25">
        <defs>
          <linearGradient id="fox" x1=".8" y1="0" x2=".2" y2="1">
            <stop offset="0" stopColor="#ffe13a" />
            <stop offset=".45" stopColor="#ff8a1e" />
            <stop offset="1" stopColor="#f5156c" />
          </linearGradient>
        </defs>
        <path d="M3 7c0-2 1-3.500 2-4.500 0 1.500.6 2.500 1.500 3C8 4.500 10 4.500 11 5c.5-2.500 2-4 4-5 0 3 2 4 4 6l1.500-1C23 8 24 10.500 24 13.500 24 19.500 19 24.500 12.500 24.500S1 19.500 1 13.500C1 11 1.500 9 3 7z" fill="url(#fox)" />
        <circle cx="13" cy="13.500" r="5.500" fill="#7a3ff2" />
        <path d="M5 9c2-1.500 4-1 5.500.5 2 .3 3 1 2.500 2-1 1-3 1-3.500 2.500 1 2 4 2.500 6 .5 0 3-3 5-6 4.500C6 18 4 13 5 9z" fill="#ff9a1f" />
      </svg>
    </Cell>
    <Spacer />
    <Cell $w={24}>
      <LineIcon d="M.8 6.500 6 1.300l5.200 5.200" box="0 0 12 8" size={12} color="#fff" weight={1.200} />
    </Cell>
    <Cell $w={24}>
      <LineIcon d="M5.500 6h6q1 0 1 1v6q0 1-1 1h-6q-1 0-1-1V7q0-1 1-1zM12.500 9l3.500-2v6l-3.500-2M6 3q3.500-2 7 0M6 17q3.500 2 7 0" size={18} color="#fff" />
    </Cell>
    <Cell $w={24}>
      <LineIcon d="M7 5.500h11.500v8H5.500V9M12 13.500v3M9 16.700h6M2 3h4v4H2zM4 7v9" size={18} color="#fff" />
    </Cell>
    <Cell $w={24}>
      <LineIcon d="M1.500 8v4.500h3l4 3.500V4.500L4.500 8zM11 8q1.500 2 0 4.500M13.500 6q2.700 4 0 8.500M16 4.500q4 5.500 0 11.500" size={18} color="#fff" />
    </Cell>
    <Clock>
      <span>6:57 PM</span>
      <span>8/16/2024</span>
    </Clock>
    <Cell $w={40}>
      <LineIcon d="M2 3h16v12h-5.500L10 17.500 7.500 15H2z" size={18} color="#fff" weight={1.200} />
    </Cell>
    <Cell $w={8} />
    <ShowDesktop />
  </TaskBar>
);

const App: React.FC = () => {
  return (
    <Screen>
      <GlobalStyle />
      <Chrome />
      <Page>
        <Header>
          <Brand>
            <DriveLogo size={36} />
            <Text $size={22} $color="#444746" $track={0.3}>Drive</Text>
          </Brand>
          <SearchBox>
            <Icon d={icons.search} size={24} />
            <Text $size={16} $track={0.35}>Search in Drive</Text>
          </SearchBox>
          <HeaderTools>
            <Cell $w={44}>
              <Icon d={icons.help} size={24} />
            </Cell>
            <Cell $w={44}>
              <Icon d={icons.settings} size={24} />
            </Cell>
            <Cell $w={40}>
              <Icon d={icons.apps} size={24} />
            </Cell>
            <Cell $w={12} />
            <Avatar $size={32}>w</Avatar>
          </HeaderTools>
        </Header>
        <Body>
          <Navigation />
          <Files />
          <SidePanel />
        </Body>
      </Page>
      <Tasks />
      <SavePassword />
      <Snackbar>
        <Text $track={0.12}>Scanning for viruses...</Text>
        <Icon d={icons.close} size={20} color="#aaa" />
      </Snackbar>
      <Brandmark />
    </Screen>
  );
};

export default App;
